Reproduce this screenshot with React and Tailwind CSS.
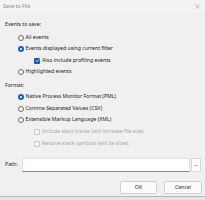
import React from "react";

const font = { fontFamily: '"Noto Sans", "Open Sans", sans-serif' };

function Radio({ checked }) {
  return checked ? (
    <span className="w-[6px] h-[6px] rounded-full bg-[#1560b8] flex items-center justify-center shrink-0">
      <span className="w-[2.5px] h-[2.5px] rounded-full bg-white" />
    </span>
  ) : (
    <span className="w-[6px] h-[6px] rounded-full border-[0.75px] border-[#6a6a6a] bg-[#fbfbfb] shrink-0" />
  );
}

function Check({ checked, disabled }) {
  if (checked)
    return (
      <span className="w-[6px] h-[6px] rounded-[1px] bg-[#1560b8] flex items-center justify-center shrink-0">
        <svg width="5" height="5" viewBox="0 0 10 10">
          <path d="M2 5.2 L4.2 7.4 L8.2 2.8" stroke="white" strokeWidth="1.6" fill="none" />
        </svg>
      </span>
    );
  return (
    <span
      className={
        "w-[6px] h-[6px] rounded-[1px] border-[0.75px] shrink-0 " +
        (disabled ? "border-[#c8c8c8] bg-[#f5f5f5]" : "border-[#6a6a6a] bg-white")
      }
    />
  );
}

function RadioRow({ checked, children }) {
  return (
    <div className="h-[11.5px] flex items-center pl-[18px] gap-[1.5px]">
      <Radio checked={checked} />
      <span className="text-[#1b1b1b]">{children}</span>
    </div>
  );
}

function CheckRow({ checked, disabled, children }) {
  return (
    <div className="h-[11.5px] flex items-center pl-[34px] gap-[2px]">
      <Check checked={checked} disabled={disabled} />
      <span className={disabled ? "text-[#a8a8a8]" : "text-[#1b1b1b]"}>{children}</span>
    </div>
  );
}

export default function App() {
  return (
    <div
      className="w-[205px] h-[200px] bg-[#f0f0f0] text-[5.2px] leading-none flex flex-col overflow-hidden"
      style={font}
    >
      <div className="h-[13px] flex items-center justify-between pl-[3px] pr-[5px] bg-[#f3f3f3]">
        <span className="text-[#8a8a8a] text-[5.2px]">Save to File</span>
        <svg width="5" height="5" viewBox="0 0 10 10">
          <path d="M1 1 L9 9 M9 1 L1 9" stroke="#777" strokeWidth="1" />
        </svg>
      </div>
      <div className="h-[12px] mt-[6px] flex items-center pl-[5px] text-[#1b1b1b]">Events to save:</div>
      <div className="mt-[0.75px] flex flex-col">
        <RadioRow>All events</RadioRow>
        <RadioRow checked>Events displayed using current filter</RadioRow>
        <CheckRow checked>Also include profiling events</CheckRow>
        <RadioRow>Highlighted events</RadioRow>
      </div>
      <div className="h-[10px] mt-[3.25px] flex items-center pl-[5px] text-[#1b1b1b]">Format:</div>
      <div className="mt-[0.25px] flex flex-col">
        <RadioRow checked>Native Process Monitor Format (PML)</RadioRow>
        <RadioRow>Comma-Separated Values (CSV)</RadioRow>
        <RadioRow>Extensible Markup Language (XML)</RadioRow>
        <div className="h-[0.5px]" />
        <CheckRow disabled>Include stack traces (will increase file size)</CheckRow>
        <div className="h-[0.5px]" />
        <CheckRow disabled>Resolve stack symbols (will be slow)</CheckRow>
      </div>
      <div className="mt-[8.25px] h-[14px] flex items-center pl-[5px] pr-[4px]">
        <span className="w-[17px] text-[#1b1b1b]">Path:</span>
        <div className="flex-1 h-[14px] bg-white border-[0.5px] border-[#e0e0e0] border-b-[#8a8a8a] rounded-[1px]" />
        <div className="ml-[1px] w-[10px] h-[14px] bg-[#fbfbfb] border-[0.5px] border-[#d6d6d6] rounded-[1px] flex items-center justify-center text-[#444]">
          ...
        </div>
      </div>
      <div className="mt-[9px] h-[13px] flex justify-end gap-[7px] pr-[3px]">
        <div className="w-[37px] h-[13px] bg-[#fbfbfb] border-[0.5px] border-[#d0d0d0] rounded-[1.5px] flex items-center justify-center text-[#1b1b1b]">
          OK
        </div>
        <div className="w-[38px] h-[13px] bg-[#fbfbfb] border-[0.5px] border-[#d0d0d0] rounded-[1.5px] flex items-center justify-center text-[#1b1b1b]">
          Cancel
        </div>
      </div>
      <div className="mt-[2px] h-[1px] bg-[#b8b8b8]" />
      <div className="flex-1 bg-[#e4e4e4]" />
    </div>
  );
}
